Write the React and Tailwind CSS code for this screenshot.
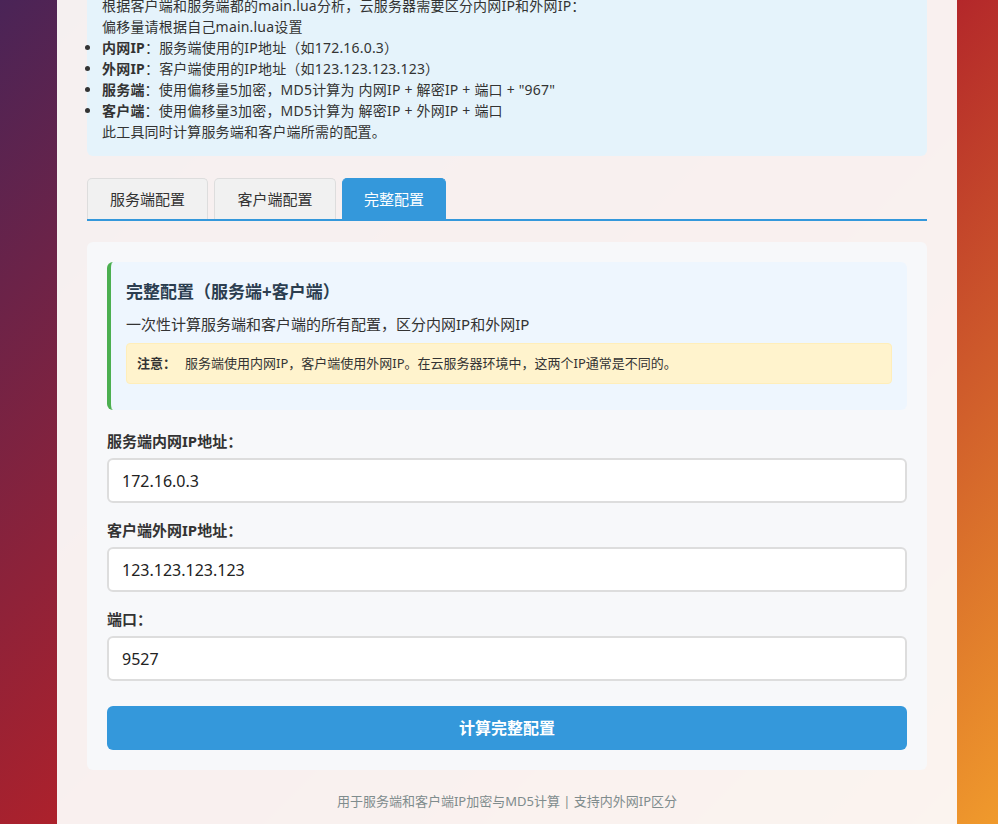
import { useState } from 'react';

const FONT = { fontFamily: '"Noto Sans", "Noto Sans CJK SC", sans-serif' };

const TABS = [
  { name: '服务端配置', w: 'w-[121px]' },
  { name: '客户端配置', w: 'w-[122px]' },
  { name: '完整配置', w: 'w-[104px]' },
];

export default function App() {
  const [tab, setTab] = useState(2);
  const [serverIp, setServerIp] = useState('172.16.0.3');
  const [clientIp, setClientIp] = useState('123.123.123.123');
  const [port, setPort] = useState('9527');

  return (
    <div
      className="h-[824px] overflow-hidden bg-[linear-gradient(135deg,#4a2457_0%,#b0212a_50%,#f09a2c_100%)]"
      style={FONT}
    >
      <div className="ml-[57px] w-[900px] h-[840px] bg-[#fbf7f6]/97 px-[30px] text-[#333]">
        {/* Info */}
        <div className="bg-[#e5f3fb] rounded-b-md px-[15px] pb-[14px] text-[14px] leading-[21px] text-[#333]">
          <p className="-mt-[5px] tracking-[0.2px]">根据客户端和服务端都的main.lua分析，云服务器需要区分内网IP和外网IP：</p>
          <p className="tracking-[0.2px]">偏移量请根据自己main.lua设置</p>
          <ul className="list-disc tracking-[0.2px]">
            <li><b>内网IP</b>：服务端使用的IP地址（如172.16.0.3）</li>
            <li><b>外网IP</b>：客户端使用的IP地址（如123.123.123.123）</li>
            <li><b>服务端</b>：使用偏移量5加密，MD5计算为 内网IP + 解密IP + 端口 + "967"</li>
            <li><b>客户端</b>：使用偏移量3加密，MD5计算为 解密IP + 外网IP + 端口</li>
          </ul>
          <p className="tracking-[0.2px]">此工具同时计算服务端和客户端所需的配置。</p>
        </div>

        {/* Tabs */}
        <div className="mt-[22px] flex gap-[6px] border-b-2 border-[#3498db]">
          {TABS.map((t, i) => (
            <button
              key={t.name}
              onClick={() => setTab(i)}
              className={`${t.w} h-[41px] rounded-t-[5px] border border-b-0 text-[15px] ${
                i === tab
                  ? 'bg-[#3498db] border-[#3498db] text-white'
                  : 'bg-[#f1f1f1] border-[#ddd] text-[#333]'
              }`}
            >
              {t.name}
            </button>
          ))}
        </div>

        {/* Panel */}
        <div className="mt-[21px] bg-[#f7f8fa] rounded-md p-[20px]">
          <div className="bg-[#eef6fe] border-l-4 border-[#4caf50] rounded-md px-[15px] pt-[17px] pb-[26px]">
            <h3 className="text-[17px] font-bold text-[#2c3e50] leading-[26px]">完整配置（服务端+客户端）</h3>
            <p className="mt-[8px] text-[15px] text-[#333] leading-[22px]">一次性计算服务端和客户端的所有配置，区分内网IP和外网IP</p>
            <div className="mt-[8px] bg-[#fff3cd] border border-[#ffeeba] rounded-[4px] px-[10px] h-[41px] flex items-center text-[13px] text-[#333]">
              <b className="mr-[9px]">注意：</b>
              服务端使用内网IP，客户端使用外网IP。在云服务器环境中，这两个IP通常是不同的。
            </div>
          </div>

          <Field label="服务端内网IP地址：" value={serverIp} onChange={setServerIp} first />
          <Field label="客户端外网IP地址：" value={clientIp} onChange={setClientIp} />
          <Field label="端口：" value={port} onChange={setPort} />

          <button className="mt-[25px] w-full h-[44px] rounded-md bg-[#3498db] text-white font-bold text-[16px]">
            计算完整配置
          </button>
        </div>

        <p className="mt-[22px] text-center text-[13px] text-[#7f8c8d]">
          用于服务端和客户端IP加密与MD5计算 | 支持内外网IP区分
        </p>
      </div>
    </div>
  );
}

function Field({ label, value, onChange, first }) {
  return (
    <div className={first ? 'mt-[20px]' : 'mt-[16px]'}>
      <label className="block text-[15px] font-bold text-[#333] leading-[22px]">{label}</label>
      <input
        className="mt-[6px] w-full h-[45px] rounded-md border-2 border-[#ddd] bg-white px-[13px] text-[16px] text-[#222] outline-none"
        value={value}
        onChange={(e) => onChange(e.target.value)}
      />
    </div>
  );
}
